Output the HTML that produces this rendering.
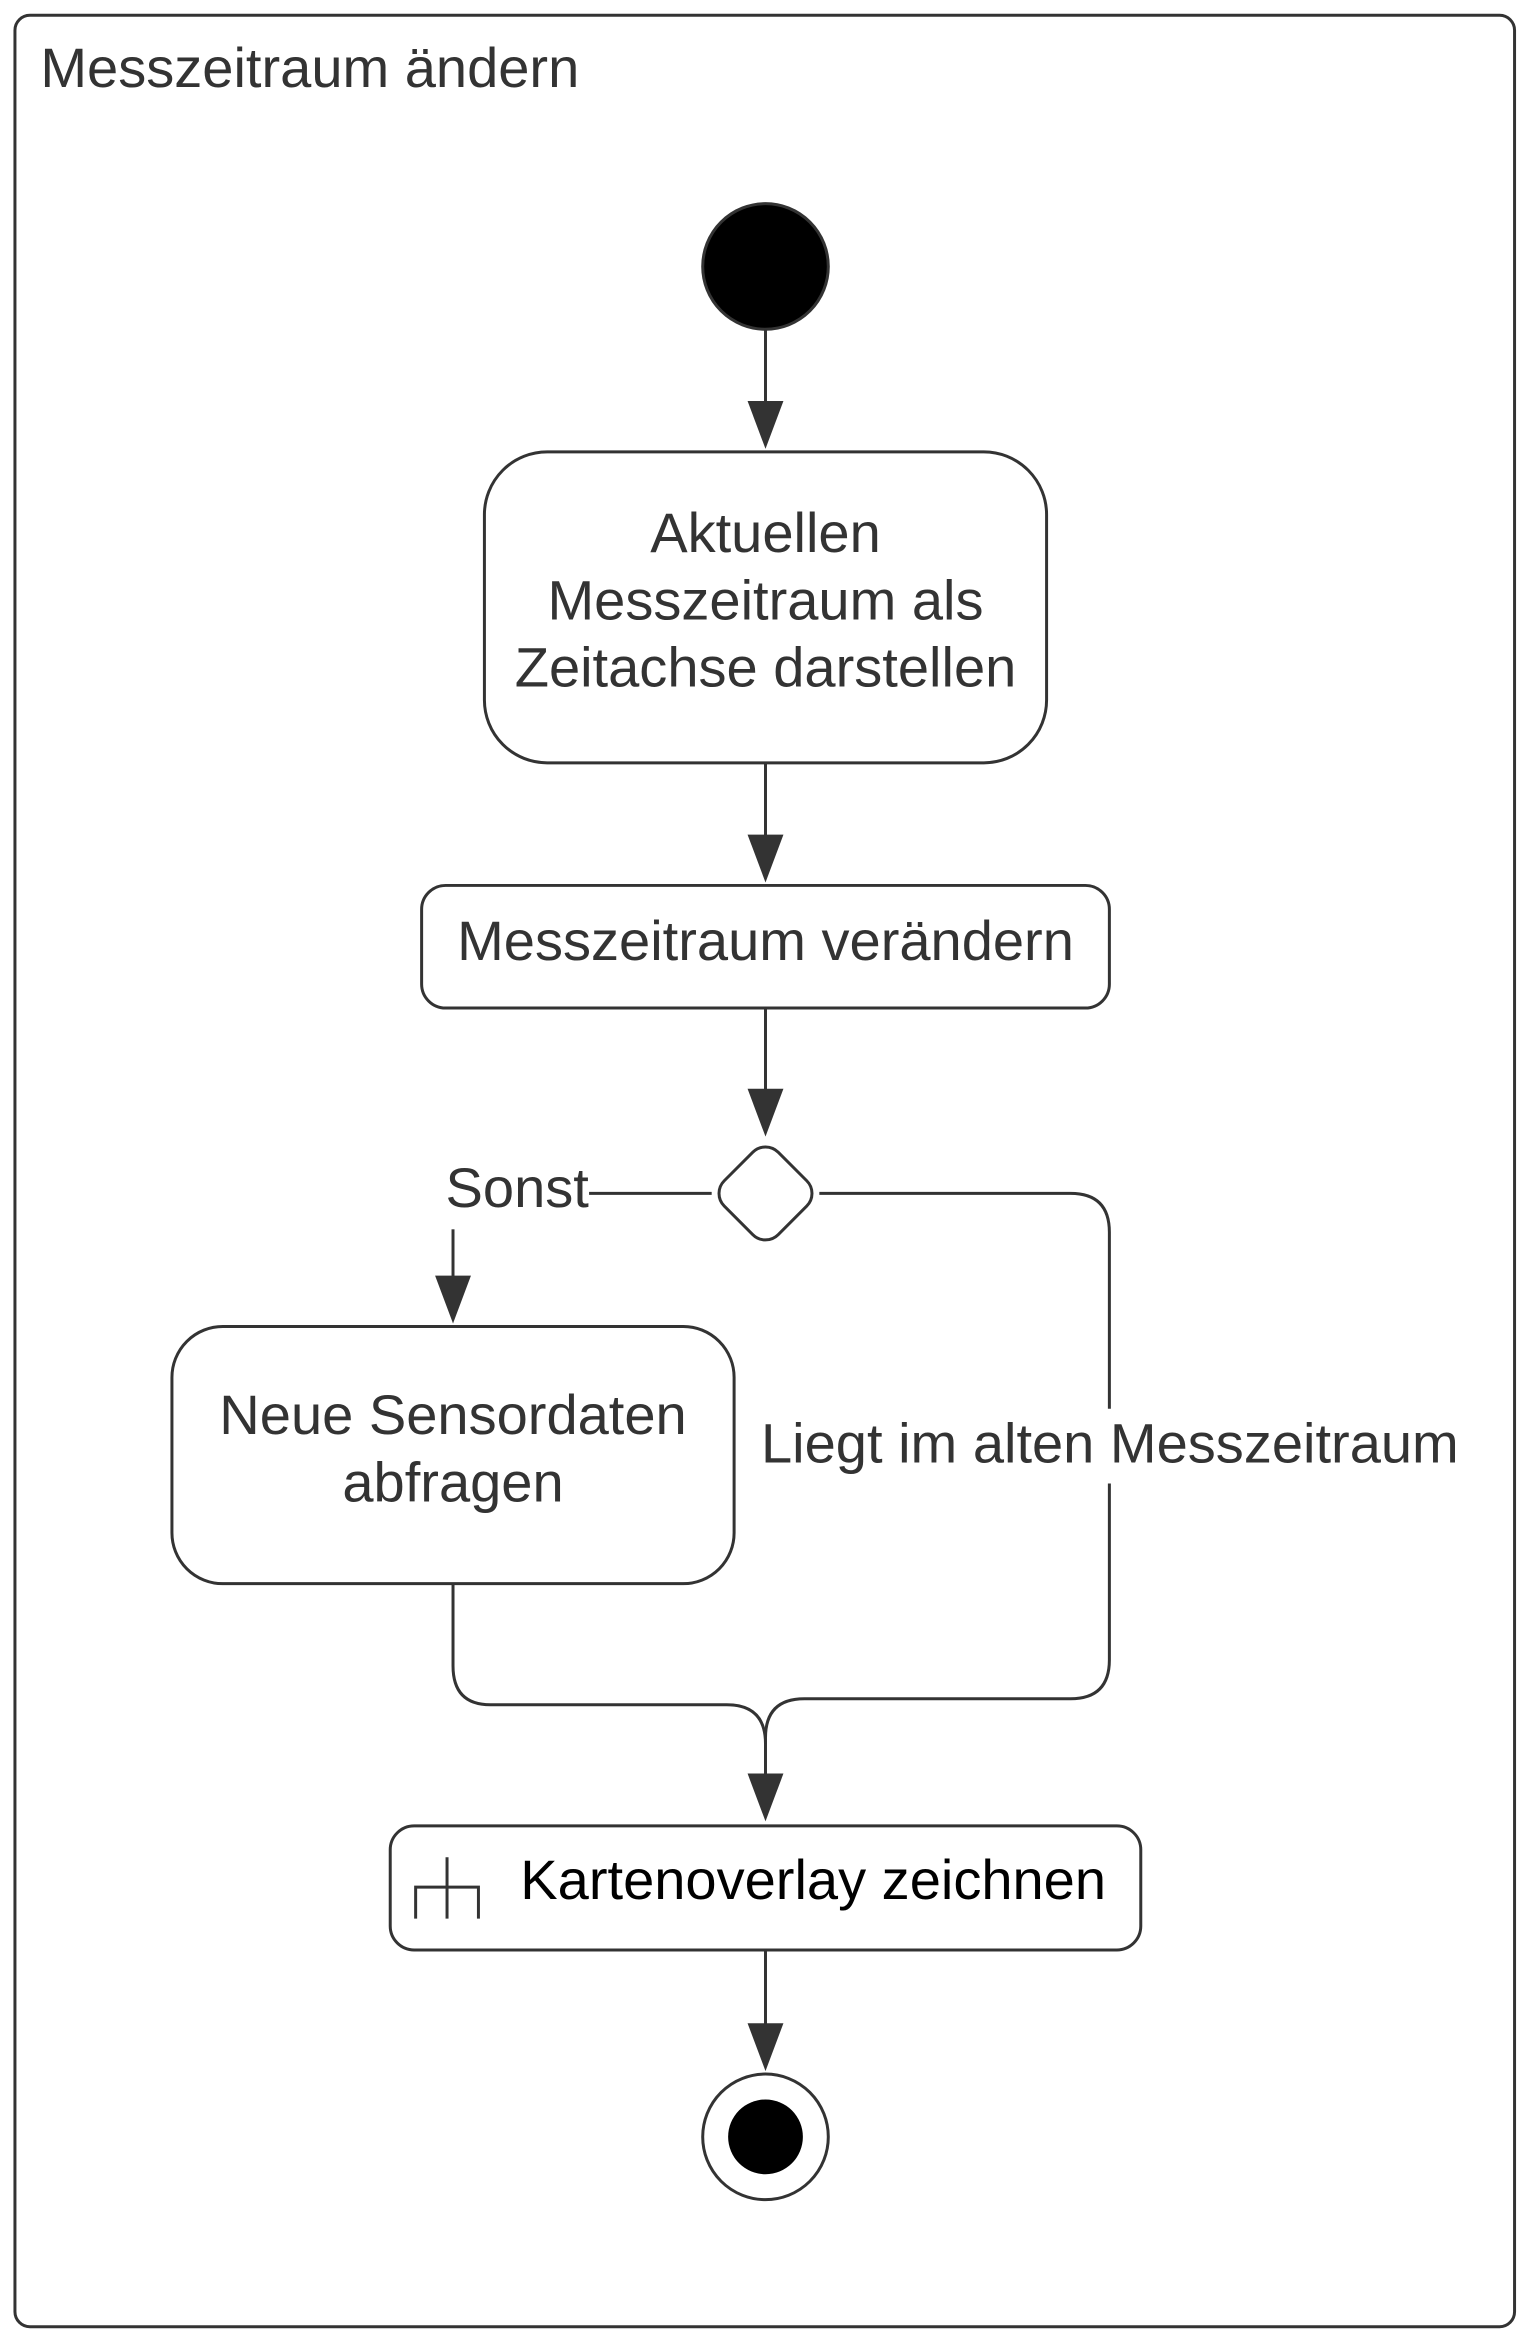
<!DOCTYPE html>
<html><head><meta charset="utf-8"><style>
html,body{margin:0;padding:0;background:#fff;}
svg{display:block;}
text{font-family:"Liberation Sans",Arial,sans-serif;font-size:37.5px;fill:#333;}
</style></head><body>
<svg width="1531" height="2345" viewBox="0 0 1024 1568" xmlns="http://www.w3.org/2000/svg">
<rect x="10" y="10" width="1003" height="1546" rx="10" fill="#fff" stroke="#333" stroke-width="2"/>
<text x="27" y="58">Messzeitraum ändern</text>
<circle cx="512" cy="178" r="42" fill="#000" stroke="#333" stroke-width="2"/>
<g stroke="#333" stroke-width="2" fill="none">
<line x1="512" y1="220" x2="512" y2="270"/>
<line x1="512" y1="510" x2="512" y2="560"/>
<line x1="512" y1="674" x2="512" y2="730"/>
<line x1="476" y1="798" x2="394" y2="798"/>
<line x1="303" y1="822" x2="303" y2="855"/>
<path d="M548 798 H716 Q742 798 742 824 V942"/>
<path d="M742 992 V1110 Q742 1136 716 1136 H538 Q512 1136 512 1162 V1188"/>
<path d="M303 1059 V1114 Q303 1140 328 1140 H486 Q512 1140 512 1166"/>
<line x1="512" y1="1304" x2="512" y2="1355"/>
</g>
<g fill="#333">
<polygon points="500,268 524,268 512,300"/>
<polygon points="500,558 524,558 512,590"/>
<polygon points="500,728 524,728 512,760"/>
<polygon points="291,853 315,853 303,885"/>
<polygon points="500,1186 524,1186 512,1218"/>
<polygon points="500,1353 524,1353 512,1385"/>
</g>
<rect x="324" y="302" width="376" height="208" rx="42" fill="#fff" stroke="#333" stroke-width="2"/>
<text x="512" y="369" text-anchor="middle">Aktuellen</text>
<text x="512" y="414" text-anchor="middle">Messzeitraum als</text>
<text x="512" y="459" text-anchor="middle">Zeitachse darstellen</text>
<rect x="282" y="592" width="460" height="82" rx="16" fill="#fff" stroke="#333" stroke-width="2"/>
<text x="512" y="642" text-anchor="middle">Messzeitraum verändern</text>
<rect x="486.5" y="772.5" width="51" height="51" rx="12" transform="rotate(45 512 798)" fill="#fff" stroke="#333" stroke-width="2"/>
<text x="298" y="807">Sonst</text>
<rect x="115" y="887" width="376" height="172" rx="34" fill="#fff" stroke="#333" stroke-width="2"/>
<text x="303" y="959" text-anchor="middle">Neue Sensordaten</text>
<text x="303" y="1004" text-anchor="middle">abfragen</text>
<text x="509" y="978">Liegt im alten Messzeitraum</text>
<rect x="261" y="1221" width="502" height="83" rx="16" fill="#fff" stroke="#333" stroke-width="2"/>
<g stroke="#333" stroke-width="2" fill="none">
<path d="M278 1283 V1262 H320 V1283 M299 1283 V1242"/>
</g>
<text x="348" y="1270" style="fill:#000">Kartenoverlay zeichnen</text>
<circle cx="512" cy="1429" r="42" fill="#fff" stroke="#333" stroke-width="2"/>
<circle cx="512" cy="1429" r="25" fill="#000"/>
</svg>
</body></html>
